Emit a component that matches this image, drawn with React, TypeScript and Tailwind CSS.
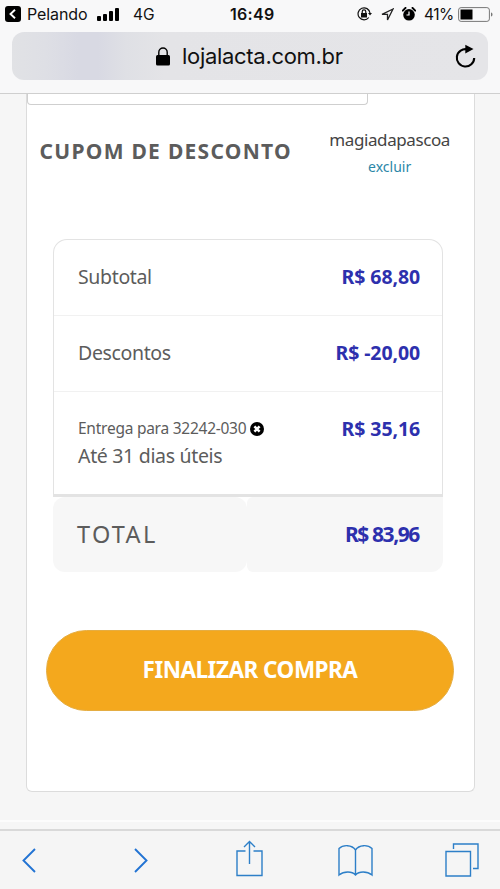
import React from "react";

const rows = [
  { label: "Subtotal", value: "R$ 68,80" },
  { label: "Descontos", value: "R$ -20,00" },
];

const StatusBar: React.FC = () => (
  <div className="flex h-7 items-center justify-between pl-[5px] pr-[7px] text-[16px] leading-none">
    <div className="flex w-[225px] items-center">
      <svg width="16" height="16" viewBox="0 0 16 16">
        <rect width="16" height="16" rx="3" fill="#000" />
        <path d="M10 3.8 5.5 8l4.5 4.2" fill="none" stroke="#fff" strokeWidth="1.9" />
      </svg>
      <span className="ml-1.5 w-[61px] tracking-[-0.1px]">Pelando</span>
      <svg className="ml-[9px]" width="23" height="13" viewBox="0 0 23 13">
        <rect x="0" y="8" width="4" height="5" rx="1" />
        <rect x="6" y="6" width="4" height="7" rx="1" />
        <rect x="12" y="3" width="4" height="10" rx="1" />
        <rect x="18" y="0" width="4" height="13" rx="1" />
      </svg>
      <span className="ml-[13px] pt-px text-[15.5px]">4G</span>
    </div>
    <span className="flex-1 font-semibold tracking-[0.3px]">16:49</span>
    <div className="flex items-center">
      <svg width="15" height="14" viewBox="0 0 15 14" fill="none" stroke="#111" strokeWidth="1.2">
        <path d="M11.8 10.5A6 6 0 1 1 13 6" />
        <path d="m11 6 2 2.5L15 6z" fill="#111" stroke="none" />
        <rect x="4" y="6" width="6" height="4.5" fill="#111" stroke="none" />
        <path d="M5.2 6V4.7a1.8 1.8 0 0 1 3.6 0V6" />
      </svg>
      <svg className="ml-[9px]" width="13" height="13" viewBox="0 0 13 13" fill="none" stroke="#222" strokeWidth="1.3">
        <path d="M12 1 1 6.3h5.5V12z" />
      </svg>
      <svg className="ml-[8px]" width="14" height="14" viewBox="0 0 14 14">
        <circle cx="7" cy="7.8" r="5.8" />
        <path d="M.8 3.6 3.5.9M10.5.9l2.7 2.7" stroke="#000" strokeWidth="2" strokeLinecap="round" />
        <path d="M7 4.5V8H4.5" fill="none" stroke="#fff" strokeWidth="1.2" />
      </svg>
      <span className="ml-2 w-[31px] pt-px text-[15.5px] tracking-[-0.5px]">41%</span>
      <svg className="ml-[3px]" width="35" height="15" viewBox="0 0 35 15">
        <rect x=".6" y=".6" width="30.8" height="13.8" rx="2.5" fill="none" stroke="#777" />
        <rect x="2.5" y="2.5" width="12" height="10" />
        <path d="M33 5.5c2 .5 2 3.5 0 4z" fill="#777" />
      </svg>
    </div>
  </div>
);

const AddressBar: React.FC = () => (
  <div className="mx-3 mt-1 flex h-12 items-center rounded-xl bg-[linear-gradient(90deg,#e1e2e5_0%,#dedfe5_7%,#d8d9e3_14%,#d8d9e3_18%,#dfe0e5_24%,#e4e4e7_32%,#e5e5e8_100%)] pl-36 pr-3">
    <svg width="14" height="19" viewBox="0 0 14 19">
      <rect y="8" width="14" height="10.5" rx="1.5" />
      <path d="M2.8 8V5.2a4.2 4.2 0 0 1 8.4 0V8" fill="none" stroke="#000" strokeWidth="1.4" />
    </svg>
    <span className="ml-3 flex-1 text-[22px] leading-none tracking-[-0.3px]">
      lojalacta.com.br
    </span>
    <svg width="21" height="25" viewBox="0 0 21 25">
      <path d="M12.5 5.4A8.7 8.7 0 1 0 19.2 14" fill="none" stroke="#000" strokeWidth="2.1" />
      <path d="m10.3.7 8.2 4.4-8.2 4.5z" />
    </svg>
  </div>
);

const Summary: React.FC = () => (
  <section className="mt-[59px] ml-[26.5px] w-[390px] text-[#5c5c5c]">
    <div className="h-[258px] rounded-t-[14px] border-x-[1.5px] border-t-[1.5px] border-b-[3px] border-[#e3e3e3]">
      {rows.map((row) => (
        <div
          key={row.label}
          className="flex h-[76px] items-center justify-between border-b border-[#f1f1f1] pb-0.5 pl-6 pr-[22px] text-[19.5px]"
        >
          <span className="tracking-[-0.35px]">{row.label}</span>
          <span className="font-bold tracking-[-0.1px] text-[#2d30ad]">{row.value}</span>
        </div>
      ))}
      <div className="flex justify-between pt-[23px] pl-6 pr-[22px]">
        <div>
          <p className="flex h-[27px] items-center text-[15.5px] tracking-[-0.25px]">
            <span>Entrega para 32242-030</span>
            <svg className="ml-1" width="14" height="14" viewBox="0 0 14 14">
              <circle cx="7" cy="7" r="7" />
              <path d="m4.4 4.4 5.2 5.2m0-5.2L4.4 9.6" stroke="#fff" strokeWidth="2.5" />
            </svg>
          </p>
          <p className="text-[19.5px] leading-[27px] tracking-[-0.32px]">Até 31 dias úteis</p>
        </div>
        <span className="text-[19.5px] leading-[27px] font-bold tracking-[-0.1px] text-[#2d30ad]">
          R$ 35,16
        </span>
      </div>
    </div>
    <div className="flex h-[75px]">
      <div className="flex w-[194px] items-center rounded-xl bg-[#f7f7f7] pl-6 text-[23.5px] tracking-[2.3px]">
        TOTAL
      </div>
      <div className="flex flex-1 items-center justify-end rounded-l-md rounded-br-xl bg-[#f7f7f7] pr-6 text-[21px] font-bold tracking-[-1.4px] text-[#2d30ad]">
        R$ 83,96
      </div>
    </div>
  </section>
);

const Toolbar: React.FC = () => (
  <nav className="flex h-[60px] items-center border-t-2 border-[#d9d9d9] bg-[#f5f5f5] pt-px pl-[22px]">
    <svg width="14" height="25" viewBox="0 0 14 25" fill="none" stroke="#2273d3" strokeWidth="1.9">
      <path d="M13 1 1.5 12.5 13 24" />
    </svg>
    <svg className="ml-[98px]" width="14" height="25" viewBox="0 0 14 25" fill="none" stroke="#2273d3" strokeWidth="1.9">
      <path d="m1 1 11.5 11.5L1 24" />
    </svg>
    <svg className="-mt-1 ml-[88px]" width="27" height="37" viewBox="0 0 27 37" fill="none" stroke="#2d7fc8" strokeWidth="1.4">
      <path d="M9.5 11H1v24.5h25V11h-8.5M13.5 24V1.5M8 7l5.5-5.5L19 7" />
    </svg>
    <svg className="ml-[75px]" width="35" height="33" viewBox="0 0 35 33" fill="none" stroke="#2d7fc8" strokeWidth="1.4">
      <path d="M17.5 6C14 .5 5 .5 1 4.5V31c5-4 13-4 16.5 0C21 27 29 27 34 31V4.5C30 .5 21 .5 17.5 6zV31" />
    </svg>
    <svg className="-mt-0.5 ml-[72px]" width="34" height="34" viewBox="0 0 34 34" fill="none" stroke="#2d7fc8" strokeWidth="1.4">
      <path d="M1 8.5h24.5V33H1zM8.5 6V1H33v24.5h-5" />
    </svg>
  </nav>
);

export default function App() {
  return (
    <div className="flex h-[889px] w-[500px] flex-col overflow-hidden bg-[#f6f6f6] font-['Noto_Sans',sans-serif]">
      <header className="h-[94px] shrink-0 border-b border-[#cfcfcf] bg-[#f8f8f9] font-['Inter',sans-serif] text-[#111]">
        <StatusBar />
        <AddressBar />
      </header>
      <main className="h-[735px] shrink-0">
        <div className="ml-[25.5px] h-[698px] w-[449.5px] rounded-b-md border-x-[1.5px] border-b-[1.5px] border-[#dcdcdc] bg-white">
          <div className="h-[11px] w-[341px] rounded-b border-x border-b-[1.5px] border-[#cfcfcf]" />
          <div className="mt-[21px] flex h-[54px] justify-between pl-[13px] pr-6">
            <h2 className="pt-2.5 text-[21px] leading-[30px] font-bold tracking-[1.28px] whitespace-nowrap text-[#5c5c5c]">
              CUPOM DE DESCONTO
            </h2>
            <div className="text-center">
              <p className="text-[17px] leading-[27px] tracking-[-0.4px] text-[#444]">magiadapascoa</p>
              <a className="block text-[14px] leading-[28px] text-[#2b87a8]" href="#excluir">
                excluir
              </a>
            </div>
          </div>
          <Summary />
          <button className="mt-[58px] ml-[19.5px] block h-[81px] w-[408px] rounded-full border border-[#e5ad42] bg-[#f4a81d] pb-0.5 text-[22.5px] font-bold tracking-[-0.5px] text-white">
            FINALIZAR COMPRA
          </button>
        </div>
        <div className="mt-7 h-[2px] bg-[#fcfcfc]" />
      </main>
      <Toolbar />
    </div>
  );
}
